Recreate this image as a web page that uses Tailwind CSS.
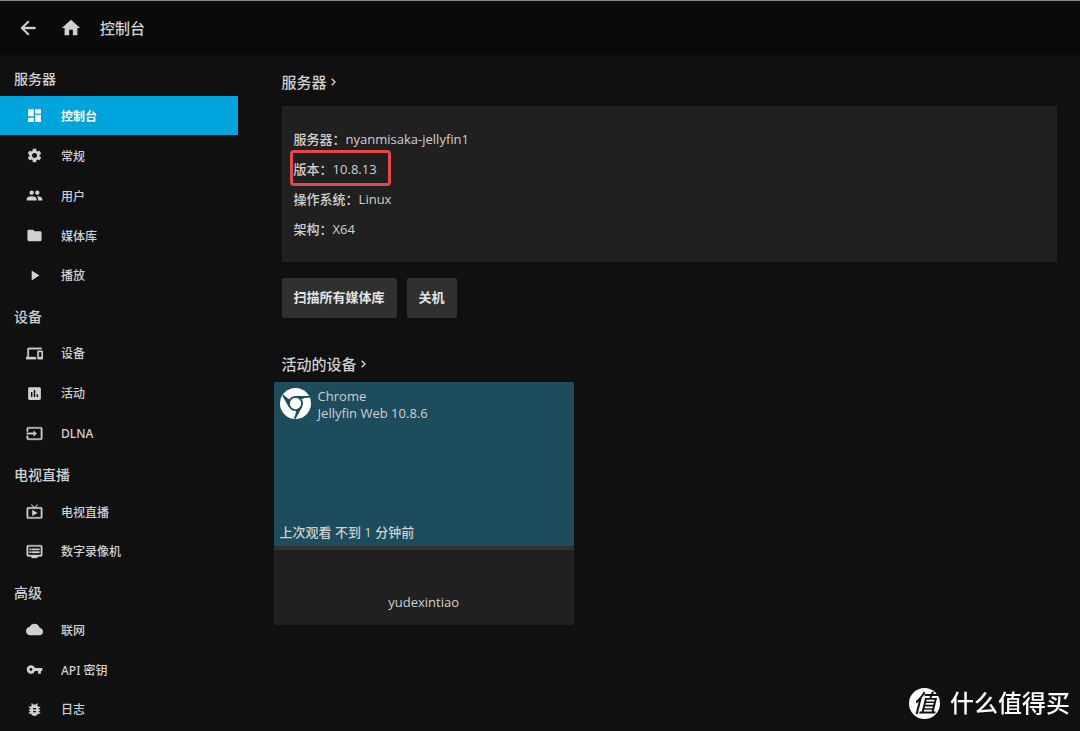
<!DOCTYPE html>
<html lang="zh-CN">
<head>
<meta charset="utf-8">
<meta name="viewport" content="width=device-width, initial-scale=1">
<title>控制台</title>
<script src="https://cdn.jsdelivr.net/npm/@tailwindcss/browser@4"></script>
</head>
<body class="min-h-screen bg-[#101010] font-['Noto_Sans','Noto_Sans_CJK_SC',sans-serif] text-[13px] text-[#d0d0d0]">
<header class="flex h-[55px] items-center border-t border-[#8c8c8c] bg-[#0a0a0a] pl-[17px]">
  <button type="button" aria-label="返回" class="mr-[21px]"><svg class="size-[22px] fill-current stroke-current stroke-[0.5]" viewBox="0 0 24 24"><path d="M20 11H7.83l5.59-5.59L12 4l-8 8 8 8 1.41-1.41L7.83 13H20v-2z"/></svg></button>
  <a href="#" aria-label="首页" class="mr-[18px]"><svg class="size-[22px] fill-current" viewBox="0 0 24 24"><path d="M10 20v-6h4v6h5v-8h3L12 3 2 12h3v8z"/></svg></a>
  <h1 class="text-[15px] font-medium leading-5">控制台</h1>
</header>
<div class="flex">
  <nav class="w-[22%] shrink-0 pt-0.5 text-xs font-medium">
    <h2 class="h-[39px] pt-1 pl-3.5 text-sm leading-[35px]">服务器</h2>
    <ul class="flex flex-col gap-px">
      <li><a href="#" class="flex h-[39px] items-center gap-[18px] bg-[#00a4dc] pl-[26px] text-white"><svg class="size-[17px] fill-current" viewBox="0 0 24 24"><path d="M3 13h8V3H3v10zm0 8h8v-6H3v6zm10 0h8V11h-8v10zm0-18v6h8V3h-8z"/></svg><span class="pt-0.5 font-bold">控制台</span></a></li>
      <li><a href="#" class="flex h-[39px] items-center gap-[18px] pl-[26px]"><svg class="size-[17px] fill-current" viewBox="0 0 24 24"><path d="M19.14 12.94c.04-.3.06-.61.06-.94 0-.32-.02-.64-.07-.94l2.03-1.58c.18-.14.23-.41.12-.61l-1.92-3.32c-.12-.22-.37-.29-.59-.22l-2.39.96c-.5-.38-1.03-.7-1.62-.94l-.36-2.54c-.04-.24-.24-.41-.48-.41h-3.84c-.24 0-.43.17-.47.41l-.36 2.54c-.59.24-1.13.57-1.62.94l-2.39-.96c-.22-.08-.47 0-.59.22L2.74 8.87c-.12.21-.08.47.12.61l2.03 1.58c-.05.3-.09.63-.09.94s.02.64.07.94l-2.03 1.58c-.18.14-.23.41-.12.61l1.92 3.32c.12.22.37.29.59.22l2.39-.96c.5.38 1.03.7 1.62.94l.36 2.54c.05.24.24.41.48.41h3.84c.24 0 .44-.17.47-.41l.36-2.54c.59-.24 1.13-.56 1.62-.94l2.39.96c.22.08.47 0 .59-.22l1.92-3.32c.12-.22.07-.47-.12-.61l-2.01-1.58zM12 15.6c-1.98 0-3.6-1.62-3.6-3.6s1.62-3.6 3.6-3.6 3.6 1.62 3.6 3.6-1.62 3.6-3.6 3.6z"/></svg><span class="pt-0.5">常规</span></a></li>
      <li><a href="#" class="flex h-[39px] items-center gap-[18px] pl-[26px]"><svg class="size-[17px] fill-current" viewBox="0 0 24 24"><path d="M16 11c1.66 0 2.99-1.34 2.99-3S17.66 5 16 5s-3 1.34-3 3 1.34 3 3 3zm-8 0c1.66 0 2.99-1.34 2.99-3S9.66 5 8 5 5 6.34 5 8s1.34 3 3 3zm0 2c-2.33 0-7 1.17-7 3.5V19h14v-2.5c0-2.33-4.67-3.5-7-3.5zm8 0c-.29 0-.62.02-.97.05 1.16.84 1.97 1.97 1.97 3.45V19h6v-2.5c0-2.33-4.67-3.5-7-3.5z"/></svg><span class="pt-0.5">用户</span></a></li>
      <li><a href="#" class="flex h-[39px] items-center gap-[18px] pl-[26px]"><svg class="size-[17px] fill-current" viewBox="0 0 24 24"><path d="M10 4H4c-1.1 0-1.99.9-1.99 2L2 18c0 1.1.9 2 2 2h16c1.1 0 2-.9 2-2V8c0-1.1-.9-2-2-2h-8l-2-2z"/></svg><span class="pt-0.5">媒体库</span></a></li>
      <li><a href="#" class="flex h-[39px] items-center gap-[18px] pl-[26px]"><svg class="size-[17px] fill-current" viewBox="0 0 24 24"><path d="M8 5v14l11-7z"/></svg><span>播放</span></a></li>
    </ul>
    <h2 class="h-[39px] pt-1 pl-3.5 text-sm leading-[35px]">设备</h2>
    <ul class="flex flex-col gap-px">
      <li><a href="#" class="flex h-[39px] items-center gap-[18px] pl-[26px]"><svg class="size-[17px] fill-current stroke-current stroke-[0.5]" viewBox="0 0 24 24"><path d="M4 6h18V4H4c-1.1 0-2 .9-2 2v11H0v3h14v-3H4V6zm19 2h-6c-.55 0-1 .45-1 1v10c0 .55.45 1 1 1h6c.55 0 1-.45 1-1V9c0-.55-.45-1-1-1zm-1 9h-4v-7h4v7z"/></svg><span>设备</span></a></li>
      <li><a href="#" class="flex h-[39px] items-center gap-[18px] pl-[26px]"><svg class="size-[17px] fill-current" viewBox="0 0 24 24"><path d="M19 3H5c-1.1 0-2 .9-2 2v14c0 1.1.9 2 2 2h14c1.1 0 2-.9 2-2V5c0-1.1-.9-2-2-2zM9 17H7v-7h2v7zm4 0h-2V7h2v10zm4 0h-2v-4h2v4z"/></svg><span>活动</span></a></li>
      <li><a href="#" class="flex h-[39px] items-center gap-[18px] pl-[26px]"><svg class="size-[17px] fill-current stroke-current stroke-[0.5]" viewBox="0 0 24 24"><path d="M21 3.01H3c-1.1 0-2 .9-2 2V9h2V4.99h18v14.03H3V15H1v4.01c0 1.1.9 1.98 2 1.98h18c1.1 0 2-.88 2-1.98v-14c0-1.11-.9-2-2-2zM11 16l4-4-4-4v3H1v2h10v3z"/></svg><span>DLNA</span></a></li>
    </ul>
    <h2 class="h-[39px] pt-1 pl-3.5 text-sm leading-[35px]">电视直播</h2>
    <ul class="flex flex-col gap-px">
      <li><a href="#" class="flex h-[39px] items-center gap-[18px] pl-[26px]"><svg class="size-[17px] fill-current stroke-current stroke-[0.5]" viewBox="0 0 24 24"><path d="M21 6h-7.59l3.29-3.29L16 2l-4 4-4-4-.7.71L10.59 6H3c-1.1 0-2 .89-2 2v12c0 1.1.9 2 2 2h18c1.1 0 2-.9 2-2V8c0-1.11-.9-2-2-2zm0 14H3V8h18v12zM9 10v8l7-4z"/></svg><span class="pt-0.5">电视直播</span></a></li>
      <li><a href="#" class="flex h-[39px] items-center gap-[18px] pl-[26px]"><svg class="size-[17px] fill-current stroke-current stroke-[0.5]" viewBox="0 0 24 24"><path d="M21 3H3c-1.1 0-2 .9-2 2v12c0 1.1.9 2 2 2h5v2h8v-2h5c1.1 0 1.99-.9 1.99-2L23 5c0-1.1-.9-2-2-2zm0 14H3V5h18v12zm-2-9H8v2h11V8zm0 4H8v2h11v-2zM7 8H5v2h2V8zm0 4H5v2h2v-2z"/></svg><span>数字录像机</span></a></li>
    </ul>
    <h2 class="h-[39px] pt-1 pl-3.5 text-sm leading-[35px]">高级</h2>
    <ul class="flex flex-col gap-px">
      <li><a href="#" class="flex h-[39px] items-center gap-[18px] pl-[26px]"><svg class="size-[17px] fill-current" viewBox="0 0 24 24"><path d="M19.35 10.04C18.67 6.59 15.64 4 12 4 9.11 4 6.6 5.64 5.35 8.04 2.34 8.36 0 10.91 0 14c0 3.31 2.69 6 6 6h13c2.76 0 5-2.24 5-5 0-2.64-2.05-4.78-4.65-4.96z"/></svg><span class="pt-0.5">联网</span></a></li>
      <li><a href="#" class="flex h-[39px] items-center gap-[18px] pl-[26px]"><svg class="size-[17px] fill-current" viewBox="0 0 24 24"><path d="M12.65 10C11.83 7.67 9.61 6 7 6c-3.31 0-6 2.69-6 6s2.69 6 6 6c2.61 0 4.83-1.67 5.65-4H17v4h4v-4h2v-4H12.65zM7 14c-1.1 0-2-.9-2-2s.9-2 2-2 2 .9 2 2-.9 2-2 2z"/></svg><span class="pt-0.5">API 密钥</span></a></li>
      <li><a href="#" class="flex h-[39px] items-center gap-[18px] pl-[26px]"><svg class="size-[17px] fill-current" viewBox="0 0 24 24"><path d="M20 8h-2.81c-.45-.78-1.07-1.45-1.82-1.96L17 4.41 15.59 3l-2.17 2.17C12.96 5.06 12.49 5 12 5s-.96.06-1.41.17L8.41 3 7 4.41l1.62 1.63C7.88 6.55 7.26 7.22 6.81 8H4v2h2.09c-.05.33-.09.66-.09 1v1H4v2h2v1c0 .34.04.67.09 1H4v2h2.81c1.04 1.79 2.97 3 5.19 3s4.15-1.21 5.19-3H20v-2h-2.09c.05-.33.09-.66.09-1v-1h2v-2h-2v-1c0-.34-.04-.67-.09-1H20V8zm-6 8h-4v-2h4v2zm0-4h-4v-2h4v2z"/></svg><span>日志</span></a></li>
    </ul>
  </nav>
  <main class="min-w-0 flex-1 pt-[15px] pr-[23px] pl-11 font-['Open_Sans','Noto_Sans_CJK_SC',sans-serif] font-medium">
    <h2><a href="#" class="flex items-center gap-1 text-[15px] leading-6">服务器<svg class="h-2 w-[5px] fill-none stroke-current stroke-[1.5]" viewBox="0 0 5 8"><path d="M.7.7 4 4 .7 7.3"/></svg></a></h2>
    <section class="mt-3 bg-[#202020] px-3 py-[18px] leading-[30px]">
      <p>服务器：nyanmisaka-jellyfin1</p>
      <p class="relative">版本：10.8.13<span class="absolute -top-1 -left-1 h-9 w-[101px] rounded-sm border-3 border-[#e84848]"></span></p>
      <p>操作系统：Linux</p>
      <p>架构：X64</p>
    </section>
    <div class="mt-4 flex gap-2.5 font-bold text-[#e4e4e4]">
      <button type="button" class="h-10 rounded-xs bg-[#303030] px-3">扫描所有媒体库</button>
      <button type="button" class="h-10 rounded-xs bg-[#303030] px-3">关机</button>
    </div>
    <h2 class="mt-[34px]"><a href="#" class="flex items-center gap-1 text-[15px] leading-6">活动的设备<svg class="h-2 w-[5px] fill-none stroke-current stroke-[1.5]" viewBox="0 0 5 8"><path d="M.7.7 4 4 .7 7.3"/></svg></a></h2>
    <article class="mt-1.5 -ml-2 w-[300px] overflow-hidden rounded-xs bg-[#202020]">
      <div class="flex h-[164px] flex-col justify-between bg-[#1d4c5c] px-1.5 pt-1.5 pb-[5px]">
        <div class="flex gap-[7px]">
          <svg class="size-[31px]" viewBox="0 0 32 32"><circle cx="16" cy="16" r="16" fill="#fff"/><g fill="none" stroke="#1d4c5c" stroke-width="1.9"><circle cx="16" cy="16" r="6.8"/><path d="M16 9.2h14.6M10.1 19.4 3.2 7.4M21.9 19.4 15.2 31.5"/></g><path d="M16 8.5h14.8L22 11.5zM9.6 19.8 3 7l7.5 5.5zM22.2 19.4 14.6 31.8l2.4-9.2z" fill="#1d4c5c"/></svg>
          <p class="leading-[17px]">Chrome<br>Jellyfin Web 10.8.6</p>
        </div>
        <p class="leading-[17px]">上次观看 不到 1 分钟前</p>
      </div>
      <div class="h-1 bg-[#333333]"></div>
      <p class="pt-[42px] pb-[13px] text-center leading-5">yudexintiao</p>
    </article>
  </main>
</div>
<div class="fixed right-2.5 bottom-3 flex items-center gap-2.5 text-2xl leading-8 font-medium text-white">
  <span class="flex size-[31px] items-center justify-center rounded-full bg-white text-[#101010] italic">值</span>
  <span>什么值得买</span>
</div>
</body>
</html>
